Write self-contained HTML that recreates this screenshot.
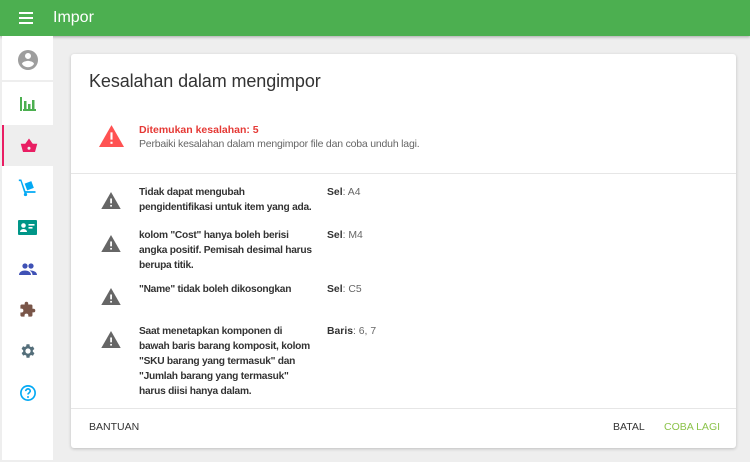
<!DOCTYPE html>
<html><head><style>
*{margin:0;padding:0;box-sizing:border-box}
body{width:750px;height:462px;background:#eeeeee;font-family:"Liberation Sans",Arial,sans-serif;position:relative;overflow:hidden}
.top{position:absolute;left:0;top:0;width:750px;height:36px;background:#4caf50;box-shadow:0 1px 3px rgba(0,0,0,.3)}
.top .t{position:absolute;left:53px;top:9px;color:#fff;font-size:16px}
.side{position:absolute;left:2px;top:36px;width:51px;height:424px;background:#fff}
.ic{position:absolute;left:0;width:51px;display:flex;justify-content:center;align-items:center;height:41px}
.card{position:absolute;left:71px;top:54px;width:665px;height:394px;background:#fff;border-radius:3px;box-shadow:0 1px 3px rgba(0,0,0,.2)}
h1{position:absolute;left:18px;top:17px;font-weight:normal;font-size:18px;color:#333;letter-spacing:-0.1px}
.red{position:absolute;left:68px;top:70px;font-size:10.5px;color:#e53935;font-weight:bold}
.sub{position:absolute;left:68px;top:84px;font-size:10.5px;color:#666;letter-spacing:-0.2px}
.hr{position:absolute;left:0;width:665px;height:1px;background:#e6e6e6}
.row{position:absolute;left:68px;font-size:10.2px;font-weight:bold;color:#333;line-height:15px;width:190px;letter-spacing:-0.25px}
.cell{position:absolute;left:256px;font-size:10.4px;color:#666;line-height:15px}
.cell b{color:#333}
.tri{position:absolute;left:30px}
.btn{position:absolute;top:367px;font-size:10.5px;color:#333}
</style></head><body>
<div class="top">
<svg style="position:absolute;left:19px;top:12px" width="14" height="12"><rect y="0" width="14" height="2" fill="#fff"/><rect y="5" width="14" height="2" fill="#fff"/><rect y="10" width="14" height="2" fill="#fff"/></svg>
<div class="t">Impor</div></div>
<div class="side">
<div class="ic" style="top:3px"><svg width="24" height="24" viewBox="0 0 24 24"><path fill="#9e9e9e" d="M12 2a10 10 0 100 20 10 10 0 000-20zm0 3a3 3 0 110 6 3 3 0 010-6zm0 14.2a7.2 7.2 0 01-6-3.2c0-2 4-3.1 6-3.1s6 1.1 6 3.1a7.2 7.2 0 01-6 3.2z"/></svg></div>
<div style="position:absolute;left:0;top:44px;width:51px;height:2px;background:#eee"></div>
<div class="ic" style="top:47px"><svg width="16" height="14"><path fill="#4caf50" d="M0 0h2v14H0zM3 12h13v2H3zM4 4h2.5v8H4zM8 7h2.5v5H8zM12 3h2.5v9H12z"/></svg></div>
<div class="ic" style="top:89px;background:#eeeeee;border-left:2px solid #e91e63"><svg width="18" height="16" viewBox="0 0 24 20"><path fill="#e91e63" d="M17 7L12 0l-5 7H1l3 11h16l3-11zM12 15a2 2 0 110-4 2 2 0 010 4z"/></svg></div>
<div class="ic" style="top:130px"><svg width="20" height="20" viewBox="0 0 24 24"><path fill="#03a9f4" d="M1 3h3l5 14h12v2H7.5L3 5H1zM8 8l8-3 3 8-8 3zM9 19a2 2 0 110 4 2 2 0 010-4z"/></svg></div>
<div class="ic" style="top:171px"><svg width="19" height="15"><rect width="19" height="15" rx="1" fill="#009688"/><circle cx="5.5" cy="5.5" r="2.3" fill="#fff"/><path d="M2 12c0-2 2-3 3.5-3s3.5 1 3.5 3z" fill="#fff"/><rect x="10.5" y="4" width="6" height="1.6" fill="#fff"/><rect x="10.5" y="7" width="4" height="1.6" fill="#fff"/></svg></div>
<div class="ic" style="top:212px"><svg width="18" height="12" viewBox="0 0 24 16"><circle cx="8" cy="4" r="3.5" fill="#3f51b5"/><circle cx="16" cy="4" r="3.5" fill="#3f51b5"/><path fill="#3f51b5" d="M0 16c0-4 4-6 8-6s8 2 8 6zM14 10c4 0 10 1 10 6h-6c0-3-2-5-4-6z"/></svg></div>
<div class="ic" style="top:253px"><svg width="17" height="17" viewBox="0 0 24 24"><path fill="#795548" d="M20.5 11H19V7a2 2 0 00-2-2h-4V3.5a2.5 2.5 0 00-5 0V5H4a2 2 0 00-2 2v3.8h1.5a2.7 2.7 0 010 5.4H2V20a2 2 0 002 2h3.8v-1.5a2.7 2.7 0 015.4 0V22H17a2 2 0 002-2v-4h1.5a2.5 2.5 0 000-5z"/></svg></div>
<div class="ic" style="top:294px"><svg width="18" height="18" viewBox="0 0 24 24"><path fill="#546e7a" d="M19.4 13a7.5 7.5 0 000-2l2.1-1.6-2-3.5-2.5 1a7 7 0 00-1.7-1L15 3h-4l-.4 2.7a7 7 0 00-1.7 1l-2.5-1-2 3.5L6.6 11a7.5 7.5 0 000 2l-2.1 1.6 2 3.5 2.5-1a7 7 0 001.7 1L11 21h4l.4-2.7a7 7 0 001.7-1l2.5 1 2-3.5zM13 15.5a3.5 3.5 0 110-7 3.5 3.5 0 010 7z" transform="translate(-1 0)"/></svg></div>
<div class="ic" style="top:336px"><svg width="18" height="18" viewBox="0 0 24 24"><circle cx="12" cy="12" r="9.5" fill="none" stroke="#03a9f4" stroke-width="2.2"/><path d="M9 9.5a3 3 0 116 0c0 2-3 2.3-3 4.5" fill="none" stroke="#03a9f4" stroke-width="2.2"/><circle cx="12" cy="17.3" r="1.3" fill="#03a9f4"/></svg></div>
</div>
<div class="card">
<h1>Kesalahan dalam mengimpor</h1>
<svg style="position:absolute;left:28px;top:71px" width="25" height="22" viewBox="0 0 24 21"><path fill="#ff5252" d="M0 21L12 0l12 21z"/><rect x="11" y="7" width="2" height="7" fill="#fff"/><rect x="11" y="16" width="2" height="2" fill="#fff"/></svg>
<div class="red">Ditemukan kesalahan: 5</div>
<div class="sub">Perbaiki kesalahan dalam mengimpor file dan coba unduh lagi.</div>
<div class="hr" style="top:119px"></div>
<svg class="tri" style="top:138px" width="20" height="17" viewBox="0 0 24 21"><path fill="#666" d="M0 21L12 0l12 21z"/><rect x="11" y="8" width="2.2" height="6" fill="#fff"/><rect x="11" y="16" width="2.2" height="2" fill="#fff"/></svg>
<div class="row" style="top:131px">Tidak dapat mengubah<br>pengidentifikasi untuk item yang ada.</div>
<div class="cell" style="top:131px"><b>Sel</b>: A4</div>
<svg class="tri" style="top:181px" width="20" height="17" viewBox="0 0 24 21"><path fill="#666" d="M0 21L12 0l12 21z"/><rect x="11" y="8" width="2.2" height="6" fill="#fff"/><rect x="11" y="16" width="2.2" height="2" fill="#fff"/></svg>
<div class="row" style="top:174px">kolom "Cost" hanya boleh berisi<br>angka positif. Pemisah desimal harus<br>berupa titik.</div>
<div class="cell" style="top:174px"><b>Sel</b>: M4</div>
<svg class="tri" style="top:234px" width="20" height="17" viewBox="0 0 24 21"><path fill="#666" d="M0 21L12 0l12 21z"/><rect x="11" y="8" width="2.2" height="6" fill="#fff"/><rect x="11" y="16" width="2.2" height="2" fill="#fff"/></svg>
<div class="row" style="top:228px">"Name" tidak boleh dikosongkan</div>
<div class="cell" style="top:228px"><b>Sel</b>: C5</div>
<svg class="tri" style="top:277px" width="20" height="17" viewBox="0 0 24 21"><path fill="#666" d="M0 21L12 0l12 21z"/><rect x="11" y="8" width="2.2" height="6" fill="#fff"/><rect x="11" y="16" width="2.2" height="2" fill="#fff"/></svg>
<div class="row" style="top:270px">Saat menetapkan komponen di<br>bawah baris barang komposit, kolom<br>"SKU barang yang termasuk" dan<br>"Jumlah barang yang termasuk"<br>harus diisi hanya dalam.</div>
<div class="cell" style="top:270px"><b>Baris</b>: 6, 7</div>
<div class="hr" style="top:354px"></div>
<div class="btn" style="left:18px">BANTUAN</div>
<div class="btn" style="left:542px">BATAL</div>
<div class="btn" style="left:593px;color:#8bc34a">COBA LAGI</div>
</div>
</body></html>
